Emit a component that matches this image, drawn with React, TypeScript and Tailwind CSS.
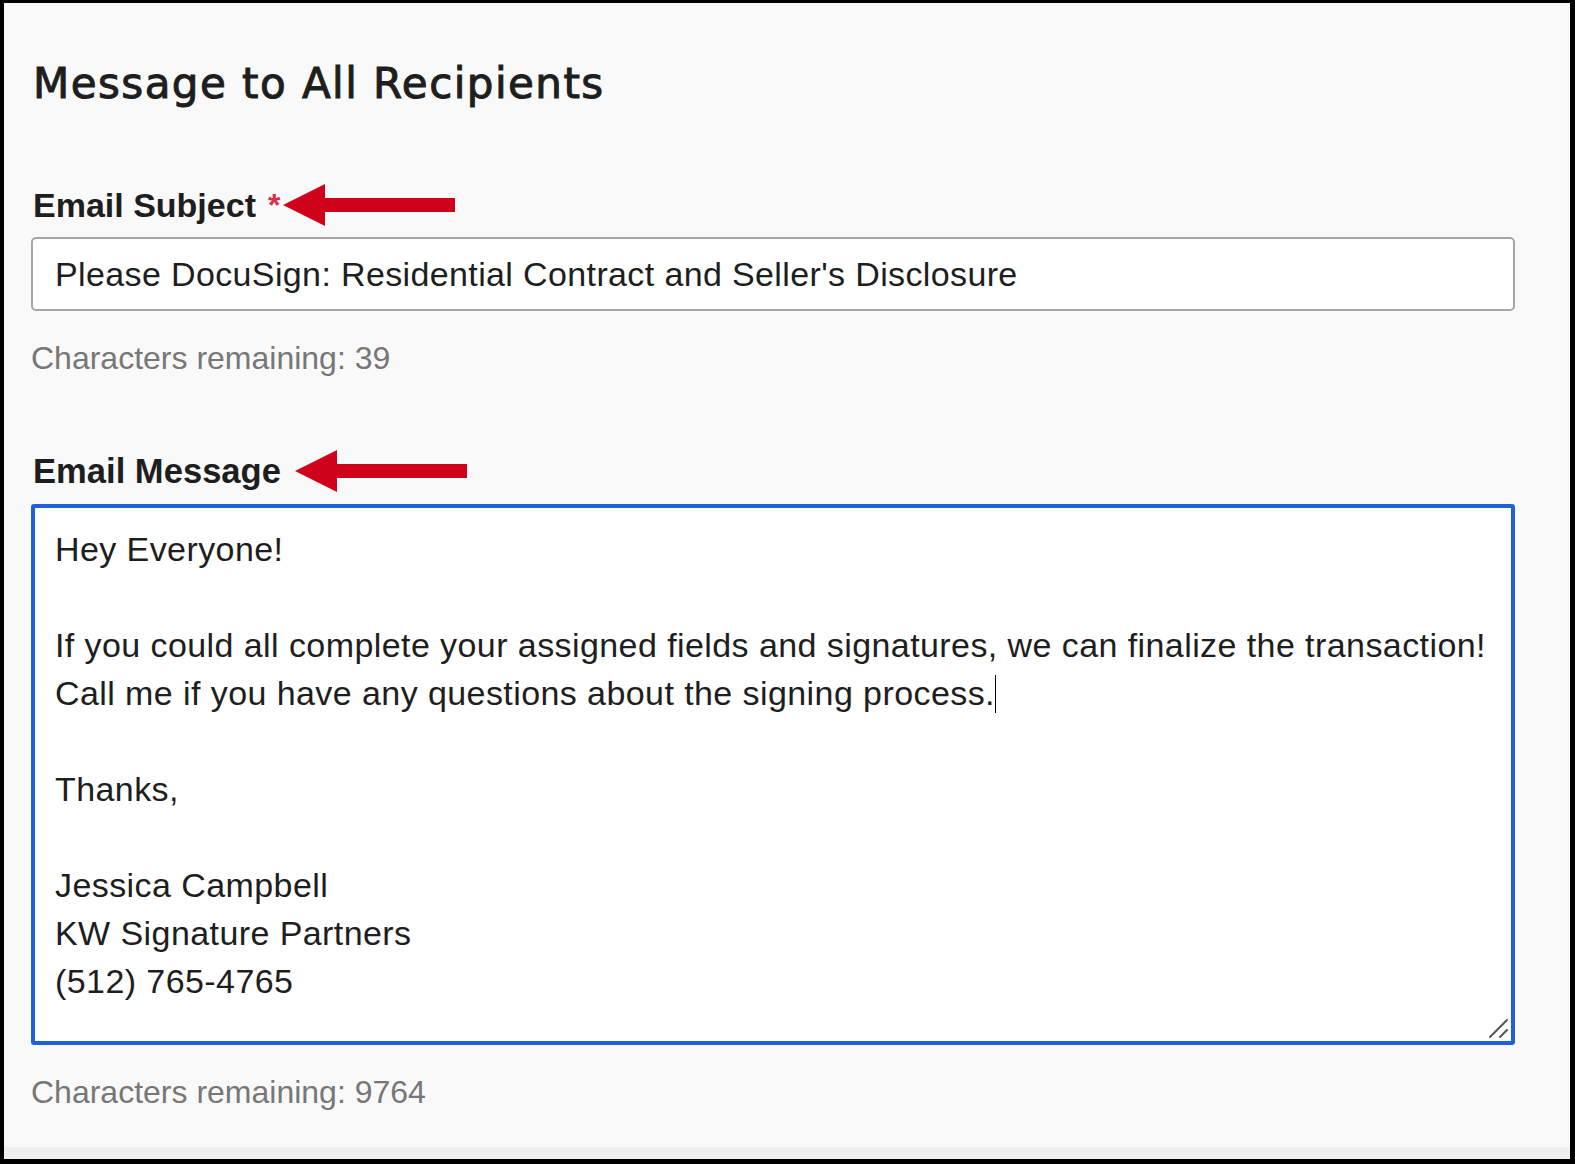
import React from "react";

const sans = "font-['Liberation_Sans',Arial,sans-serif]";

function Arrow() {
  return (
    <svg width="172" height="42" viewBox="0 0 172 42" className="shrink-0">
      <polygon points="0,21 42,0 42,14 172,14 172,28 42,28 42,42" fill="#d0021b" />
    </svg>
  );
}

const lines = [
  "Hey Everyone!",
  "",
  "If you could all complete your assigned fields and signatures, we can finalize the transaction!",
  "Call me if you have any questions about the signing process.",
  "",
  "Thanks,",
  "",
  "Jessica Campbell",
  "KW Signature Partners",
  "(512) 765-4765",
];

export default function App() {
  return (
    <div className="w-[1575px] h-[1164px] flex flex-col bg-[#f9f9f9] border-black border-l-4 border-t-[3px] border-r-[5px] border-b-[5px] text-[#1e1e1e]">
      <div className="flex-1 pt-[57px] pl-[27px] pr-[55px]">
        <h1 className="font-['DejaVu_Sans',Verdana,sans-serif] text-[42px] leading-[48px] tracking-[1.45px] pl-[2px] [-webkit-text-stroke:1px_#1e1e1e]">
          Message to All Recipients
        </h1>

        <div className={`${sans} mt-[77px] h-[40px] flex items-center pl-[2px]`}>
          <span className="text-[34px] font-bold leading-[40px]">Email Subject</span>
          <span className="ml-[12px] text-[32px] font-bold leading-[40px] text-[#d8304a]">*</span>
          <span className="ml-[3px] -mt-[1px]">
            <Arrow />
          </span>
        </div>

        <div className={`${sans} mt-[12px] h-[74px] bg-white border-2 border-[#a6a6a6] rounded-[5px] pl-[22px] flex items-center text-[34px] tracking-[0.37px]`}>
          Please DocuSign: Residential Contract and Seller's Disclosure
        </div>

        <div className={`${sans} mt-[29px] text-[32px] leading-[36px] text-[#777777]`}>
          Characters remaining: 39
        </div>

        <div className={`${sans} mt-[75px] h-[40px] flex items-center pl-[2px]`}>
          <span className="text-[34.6px] font-bold leading-[40px]">Email Message</span>
          <span className="ml-[14px]">
            <Arrow />
          </span>
        </div>

        <div className={`${sans} relative mt-[13px] h-[541px] bg-white border-4 border-[#2062d6] rounded-[3px] pl-[20px] pt-[17px] text-[34px] leading-[48px] tracking-[0.42px]`}>
          {lines.map((l, i) => (
            <div key={i} className="h-[48px] whitespace-pre">
              {l}
              {i === 3 && <span className="inline-block w-[1.5px] h-[38px] bg-black align-middle -mt-[4px]" />}
            </div>
          ))}
          <svg className="absolute right-[2px] bottom-[2px]" width="22" height="22" viewBox="0 0 22 22">
            <line x1="3" y1="20" x2="20" y2="3" stroke="#555" strokeWidth="2" strokeLinecap="round" />
            <line x1="13" y1="20" x2="20" y2="13" stroke="#555" strokeWidth="2" strokeLinecap="round" />
          </svg>
        </div>

        <div className={`${sans} mt-[29px] text-[32px] leading-[36px] text-[#777777]`}>
          Characters remaining: 9764
        </div>
      </div>
      <div className="h-[12px] bg-[#efefef]" />
    </div>
  );
}
